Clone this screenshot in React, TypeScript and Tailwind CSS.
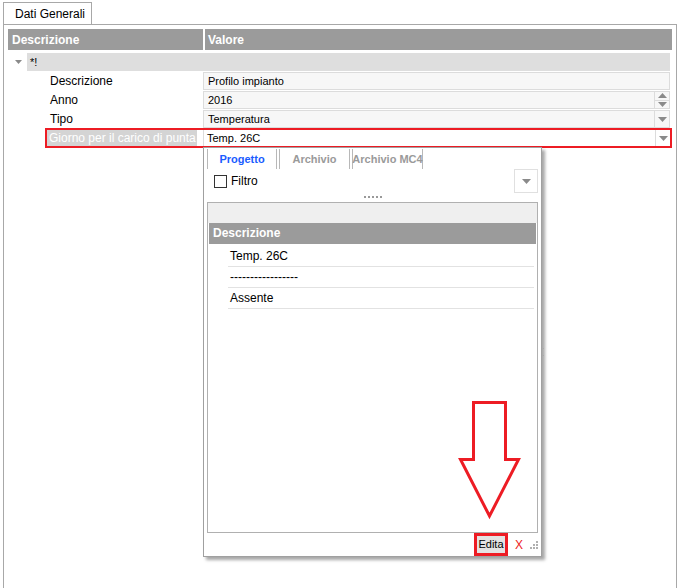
import React from 'react';

const font = { fontFamily: '"Liberation Sans", Arial, sans-serif' };

const Caret = ({ up = false }: { up?: boolean }) => (
  <svg width="9" height="5" viewBox="0 0 9 5" className="block">
    {up ? <path d="M0 5 L4.5 0 L9 5 Z" fill="#8a8a8a" /> : <path d="M0 0 H9 L4.5 5 Z" fill="#8a8a8a" />}
  </svg>
);

const rows = [
  { label: 'Descrizione', value: 'Profilo impianto', kind: 'text' },
  { label: 'Anno', value: '2016', kind: 'spin' },
  { label: 'Tipo', value: 'Temperatura', kind: 'combo' },
];

const listItems = ['Temp. 26C', '-----------------', 'Assente'];

export default function App() {
  return (
    <div className="relative w-[679px] h-[588px] bg-white overflow-hidden text-[12px] text-black whitespace-nowrap" style={font}>
      {/* Tab */}
      <div className="flex pl-[3px] pt-[2px]">
        <div className="h-[22px] w-[89px] border border-b-0 border-[#a8a8a8] bg-white flex items-center pl-[11px] text-[12px]">
          Dati Generali
        </div>
      </div>

      {/* Main panel */}
      <div className="ml-[3px] mr-[2px] h-[565px] border border-[#a8a8a8] pt-[4px] px-[4px]">
        <div className="flex h-[21px] text-white font-bold text-[12px]">
          <div className="w-[195px] bg-[#9b9b9b] flex items-center pl-[4px]">Descrizione</div>
          <div className="w-[2px]" />
          <div className="flex-1 bg-[#9b9b9b] flex items-center pl-[3px]">Valore</div>
        </div>

        <div className="flex items-center h-[18px] mt-[3px]">
          <div className="w-[19px] flex justify-center pl-[2px]">
            <svg width="7" height="4" viewBox="0 0 7 4"><path d="M0 0 H7 L3.5 4 Z" fill="#8a8a8a" /></svg>
          </div>
          <div className="flex-1 h-full bg-[#dedede] mr-[2px] flex items-center pl-[3px] text-[11px]">*!</div>
        </div>

        <div className="flex flex-col gap-[1px] mt-[1px]">
          {rows.map((r) => (
            <div key={r.label} className="flex h-[18px]">
              <div className="w-[195px] pl-[42px] flex items-center">{r.label}</div>
              <div className="flex-1 mr-[2px] border border-[#dcdcdc] bg-[#f7f7f7] flex items-center text-[11px]">
                <span className="flex-1 pl-[4px]">{r.value}</span>
                {r.kind === 'spin' && (
                  <div className="w-[15px] h-full border-l border-[#dcdcdc] flex flex-col">
                    <div className="flex-1 flex items-center justify-center border-b border-[#dcdcdc]"><Caret up /></div>
                    <div className="flex-1 flex items-center justify-center"><Caret /></div>
                  </div>
                )}
                {r.kind === 'combo' && (
                  <div className="w-[15px] h-full border-l border-[#dcdcdc] flex items-center justify-center"><Caret /></div>
                )}
              </div>
            </div>
          ))}

          <div className="flex h-[20px] ml-[37px] mt-[-1px] border-2 border-[#ed1c24]">
            <div className="w-[156px] flex items-center overflow-hidden">
              <span className="bg-[#d4d4d4] text-white pl-[2px] pr-[1px] leading-[16px]">Giorno per il carico di punta</span>
            </div>
            <div className="flex-1 bg-white flex items-center text-[11px] border-l border-[#dcdcdc]">
              <span className="flex-1 pl-[3px]">Temp. 26C</span>
              <div className="w-[15px] h-full border-l border-[#dcdcdc] flex items-center justify-center"><Caret /></div>
            </div>
          </div>
        </div>
      </div>

      {/* Dropdown popup */}
      <div className="absolute left-[203px] top-[147px] w-[339px] h-[410px] bg-white border border-[#a0a0a0] shadow-[3px_3px_3px_rgba(0,0,0,0.35)] flex flex-col">
        <div className="flex h-[21px] pl-[3px] pt-[1px] gap-[2px] text-[11px] font-bold">
          <div className="w-[70px] border-x border-[#b8b8b8] flex items-center justify-center text-[#1a5cff]">Progetto</div>
          <div className="w-[71px] border-x border-[#b8b8b8] flex items-center justify-center text-[#9a9a9a]">Archivio</div>
          <div className="w-[71px] border-x border-[#b8b8b8] flex items-center justify-center text-[#9a9a9a]">Archivio MC4</div>
        </div>
        <div className="flex items-center h-[25px] pl-[10px] pr-[3px]">
          <div className="w-[13px] h-[13px] border border-[#333]" />
          <span className="ml-[4px]">Filtro</span>
          <div className="ml-auto w-[24px] h-[24px] border border-[#e0e0e0] flex items-center justify-center"><Caret /></div>
        </div>
        <div className="flex justify-center h-[7px] items-center gap-[2px]">
          {[0, 1, 2, 3, 4].map((i) => (
            <div key={i} className="w-[2px] h-[2px] bg-[#999]" />
          ))}
        </div>
        <div className="mx-[3px] mt-[1px] h-[332px] border border-[#b0b0b0] flex flex-col">
          <div className="h-[20px] bg-[#efefef]" />
          <div className="h-[21px] bg-[#9b9b9b] text-white font-bold flex items-center pl-[4px] mx-[1px]">Descrizione</div>
          <div className="flex flex-col pl-[20px] pr-[3px] pt-[2px]">
            {listItems.map((t) => (
              <div key={t} className="h-[21px] border-b border-[#e2e2e2] flex items-center pl-[2px]">{t}</div>
            ))}
          </div>
        </div>
        <div className="flex-1 flex items-center justify-end pr-[3px] gap-[7px]">
          <div className="border-[3px] border-[#ed1c24] h-[23px] w-[34px] flex items-center justify-center">
            <div className="bg-[#e3e3e3] w-full h-full flex items-center justify-center text-[11px]">Edita</div>
          </div>
          <span className="text-[#ed1c24] text-[12px]">X</span>
          <svg width="8" height="8" viewBox="0 0 8 8">
            <g fill="#b0b0b0">
              <rect x="6" y="0" width="2" height="2" />
              <rect x="3" y="3" width="2" height="2" />
              <rect x="6" y="3" width="2" height="2" />
              <rect x="0" y="6" width="2" height="2" />
              <rect x="3" y="6" width="2" height="2" />
              <rect x="6" y="6" width="2" height="2" />
            </g>
          </svg>
        </div>
        <div className="absolute right-[-3px] top-[200px] w-[2px] h-[8px] border-y border-[#aaa]" />
      </div>

      {/* Annotation arrow */}
      <svg className="absolute left-[455px] top-[399px]" width="70" height="122" viewBox="0 0 70 122">
        <path d="M18.5 3.5 H50.5 V60.5 H63.5 L34.5 117 L5.5 60.5 H18.5 Z" fill="white" stroke="#ed1c24" strokeWidth="3" strokeLinejoin="miter" />
      </svg>
    </div>
  );
}
